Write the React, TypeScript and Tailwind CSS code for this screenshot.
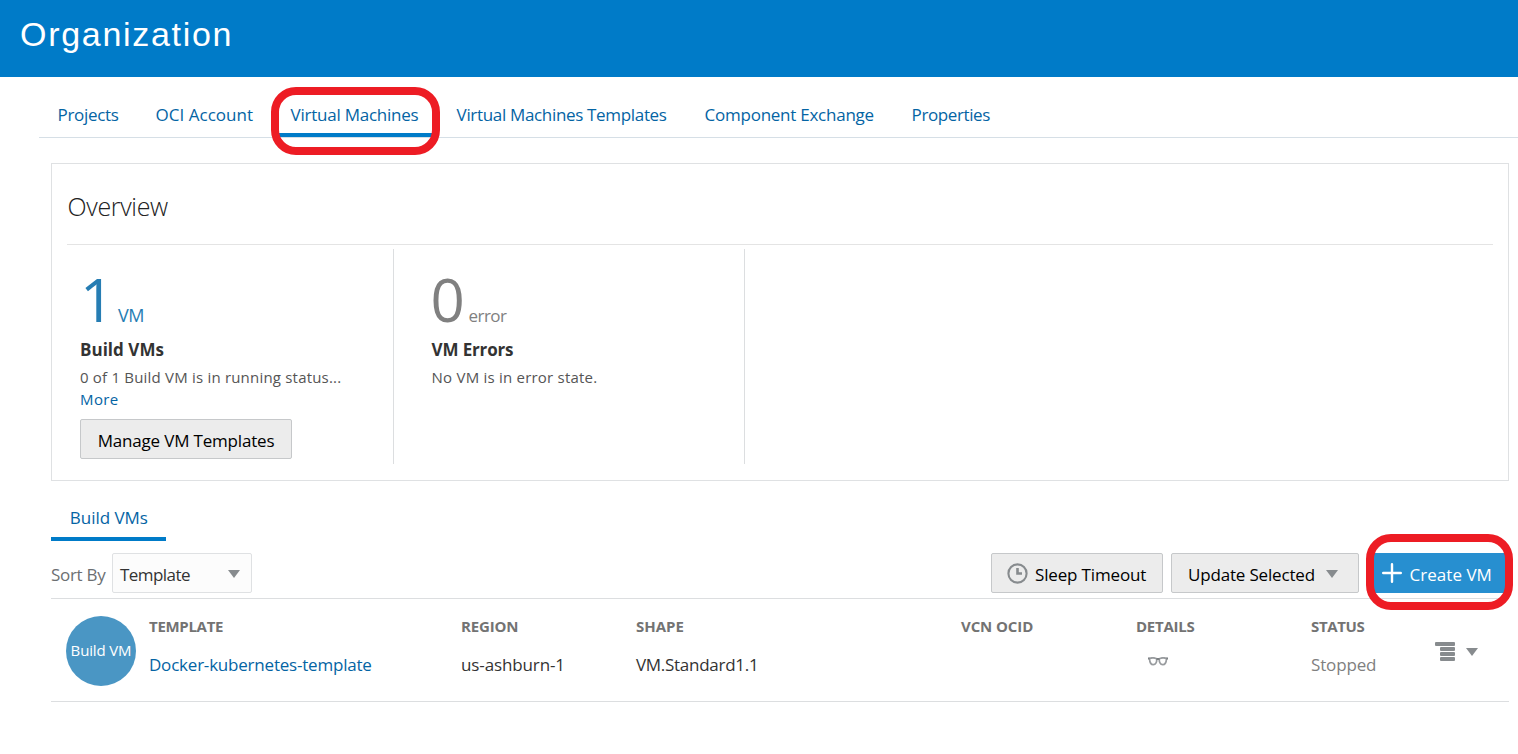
import type { ReactNode } from "react";

const tabs = [
  { label: "Projects", cls: "w-[98px] tracking-[-0.34px]" },
  { label: "OCI Account", cls: "w-[135px] tracking-[0.02px]" },
  { label: "Virtual Machines", cls: "w-[166px] tracking-[-0.24px]", active: true },
  { label: "Virtual Machines Templates", cls: "w-[248px] tracking-[-0.33px]" },
  { label: "Component Exchange", cls: "w-[207px] tracking-[-0.25px]" },
  { label: "Properties", cls: "w-[116px] tracking-[-0.4px]" },
];

function Caret() {
  return (
    <svg width="12" height="8" viewBox="0 0 12 8" className="shrink-0" fill="#878b8e">
      <path d="M0 0h12L6 8z" />
    </svg>
  );
}

function Ring({ className }: { className: string }) {
  return <div className={"pointer-events-none absolute border-8 border-[#ed1c24] " + className} />;
}

function Cell({ title, titleClass, className, children }: { title: string; titleClass: string; className: string; children?: ReactNode }) {
  return (
    <div className={"shrink-0 whitespace-nowrap " + className}>
      <div className={"text-[15px] font-bold leading-5 text-[#737373] " + titleClass}>{title}</div>
      <div className="mt-[17px] leading-6">{children}</div>
    </div>
  );
}

export default function App() {
  return (
    <div className="relative h-[754px] overflow-hidden bg-white font-['Open_Sans',sans-serif] text-[17px] text-[#333]">
      <header className="h-[77px] bg-[#007bc8] pl-5 pt-[14px]">
        <h1 className="font-['Liberation_Sans',sans-serif] text-[34px] leading-10 tracking-[1.7px] text-white">Organization</h1>
      </header>

      <nav className="ml-[39px] flex h-[61px] border-b border-[#d6dfe6] text-[#0464a4]">
        {tabs.map((t) => (
          <a
            key={t.label}
            className={
              "h-[60px] shrink-0 whitespace-nowrap pl-[18.6px] pt-[26px] leading-6 " +
              t.cls +
              (t.active ? " border-b-4 border-[#007bc8]" : "")
            }
          >
            {t.label}
          </a>
        ))}
      </nav>

      <section className="ml-[51px] mt-[25px] h-[318px] w-[1458px] border border-[#dfe1e3] px-[15px] pt-[26px]">
        <h2 className="border-b border-[#e4e4e4] pb-[22px] pl-[0.6px] text-[25px] font-light leading-8 tracking-[-0.36px] text-[#222]">Overview</h2>
        <div className="mt-1 flex h-[215px]">
          <div className="w-[327px] border-r border-[#dcdee0] pl-[13px] pt-5">
            <div className="flex h-[61px] items-baseline text-[#267db3]">
              <span className="w-[38px] text-[60px] leading-[60px]">1</span>
              <span className="text-[18px] leading-6 tracking-[-0.4px]">VM</span>
            </div>
            <div className="mt-2 font-bold leading-6 tracking-[0.03px]">Build VMs</div>
            <div className="mt-1 text-[15px] leading-[22px] tracking-[0.2px] text-[#555]">0 of 1 Build VM is in running status...</div>
            <div className="text-[15px] leading-[22px] tracking-[0.4px] text-[#0464a4]">More</div>
            <button className="mt-[9px] h-10 w-[212px] rounded-[2px] border border-[#c6c8ca] bg-[#ececec] pt-[3px] tracking-[-0.18px] text-black">
              Manage VM Templates
            </button>
          </div>
          <div className="w-[351px] border-r border-[#dcdee0] pl-[37.6px] pt-5">
            <div className="-ml-px flex h-[61px] items-baseline text-[#808080]">
              <span className="w-[38px] text-[60px] leading-[60px]">0</span>
              <span className="leading-6 tracking-[-0.57px]">error</span>
            </div>
            <div className="mt-2 font-bold leading-6 tracking-[-0.15px]">VM Errors</div>
            <div className="mt-1 text-[15px] leading-[22px] tracking-[0.22px] text-[#555]">No VM is in error state.</div>
          </div>
        </div>
      </section>

      <div className="ml-[51px] w-[115px] whitespace-nowrap border-b-4 border-[#007bc8] pb-[7px] pl-[18.8px] pt-[25px] leading-6 tracking-[-0.03px] text-[#0464a4]">Build VMs</div>

      <div className="ml-[51px] mt-3 flex h-[46px] w-[1458px] items-start border-b border-[#dcdee0]">
        <span className="w-[61px] pt-[10px] leading-6 tracking-[-0.3px] text-[#6c6f72]">Sort By</span>
        <div className="flex h-10 w-[140px] items-center justify-between rounded-[2px] border border-[#dfe1e3] bg-[#fcfcfc] pl-[7px] pr-[11px]">
          <span className="pt-[3px] leading-6 tracking-[-0.55px]">Template</span>
          <div className="pt-px"><Caret /></div>
        </div>
        <div className="ml-auto flex text-black">
          <button className="flex h-10 w-[172px] items-center rounded-[2px] border border-[#c6c8ca] bg-[#ececec] pl-[15px]">
            <svg width="21" height="21" viewBox="0 0 21 21" fill="none" stroke="#878b8e" className="mr-[7px] shrink-0">
              <circle cx="10.5" cy="10.5" r="9.1" strokeWidth="2.1" />
              <path d="M10.500 5v5.500h4.500" strokeWidth="2.6" />
            </svg>
            <span className="whitespace-nowrap pt-[3px] tracking-[-0.15px]">Sleep Timeout</span>
          </button>
          <button className="ml-2 flex h-10 w-[188px] items-center rounded-[2px] border border-[#c6c8ca] bg-[#ececec] pl-4">
            <span className="mr-[11px] whitespace-nowrap pt-[3px] tracking-[-0.17px]">Update Selected</span>
            <div className="pt-px"><Caret /></div>
          </button>
          <button className="ml-2 flex h-10 w-[142px] items-center rounded-[2px] bg-[#278fd0] pl-[15px] text-white">
            <svg width="20" height="20" viewBox="0 0 20 20" stroke="#fff" strokeWidth="2.4" strokeLinecap="round" className="mr-[7.600px] shrink-0">
              <path d="M10 1.200v17.600M1.200 10h17.600" />
            </svg>
            <span className="whitespace-nowrap pt-[3px] tracking-[0.02px]">Create VM</span>
          </button>
        </div>
      </div>

      <div className="ml-[51px] flex h-[103px] w-[1458px] items-start border-b border-[#dcdee0] pl-[15px] pt-[17px]">
        <div className="flex size-[70px] shrink-0 items-center justify-center whitespace-nowrap rounded-full bg-[#4a96c4] pb-px text-[15px] tracking-[-0.15px] text-white">Build VM</div>
        <Cell title="TEMPLATE" titleClass="tracking-[-0.3px]" className="ml-3 w-[313px] pl-px">
          <a className="tracking-[-0.21px] text-[#0464a4]">Docker-kubernetes-template</a>
        </Cell>
        <Cell title="REGION" titleClass="tracking-[-0.15px]" className="w-[175px]">
          <span className="tracking-[-0.12px]">us-ashburn-1</span>
        </Cell>
        <Cell title="SHAPE" titleClass="" className="w-[325px]">
          <span className="tracking-[-0.28px]">VM.Standard1.1</span>
        </Cell>
        <Cell title="VCN OCID" titleClass="tracking-[-0.1px]" className="w-[175px]" />
        <Cell title="DETAILS" titleClass="tracking-[-0.25px]" className="w-[175px]">
          <svg width="20" height="9" viewBox="0 0 20 9" className="ml-3 mt-[21px]" fill="none" stroke="#999c9f" strokeWidth="1.7">
            <path d="M1.500 1.400C3.500.7 7 .8 8.700 1.800 9 5 7.800 7.700 5.200 7.700 2.900 7.700 1.700 6 1.500 1.400zM18.500 1.400C16.500.7 13 .8 11.300 1.800 11 5 12.200 7.700 14.800 7.700 17.100 7.700 18.300 6 18.500 1.400z" />
            <path d="M8.500 2.100h3M0 1.500h1.500M18.500 1.500H20" stroke="#7c8083" strokeWidth="2" />
          </svg>
        </Cell>
        <Cell title="STATUS" titleClass="tracking-[-0.36px]" className="w-[124px]">
          <span className="tracking-[-0.14px] text-[#808080]">Stopped</span>
        </Cell>
        <div className="mt-[26px] flex">
          <svg width="20" height="19" viewBox="0 0 20 19" fill="#878b8e">
            <rect width="20" height="4" rx="1" />
            <rect x="5" y="5" width="15" height="4" rx="1" />
            <rect x="5" y="10" width="15" height="4" rx="1" />
            <rect x="5" y="15" width="15" height="4" rx="1" />
          </svg>
          <div className="ml-[11px] mt-1.5"><Caret /></div>
        </div>
      </div>

      <Ring className="left-[271px] top-[87px] h-[68px] w-[169px] rounded-[25px]" />
      <Ring className="left-[1366px] top-[534px] h-[76px] w-[147px] rounded-[25px]" />
    </div>
  );
}
